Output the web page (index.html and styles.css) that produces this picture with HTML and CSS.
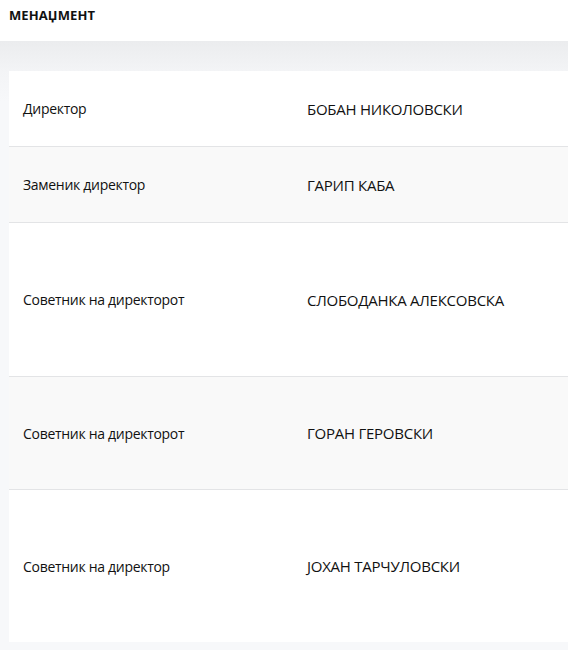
FILE: index.html
```html
<!DOCTYPE html>
<html lang="mk">
<head>
<meta charset="utf-8">
<title>Менаџмент</title>
<link rel="stylesheet" href="styles.css">
</head>
<body>
<header class="page-header">
  <h1 class="page-title">МЕНАЏМЕНТ</h1>
</header>
<main class="content">
  <table class="staff">
    <tbody>
      <tr class="row row-short"><td class="role">Директор</td><td class="name">БОБАН НИКОЛОВСКИ</td></tr>
      <tr class="row row-short alt"><td class="role">Заменик директор</td><td class="name">ГАРИП КАБА</td></tr>
      <tr class="row row-tall"><td class="role">Советник на директорот</td><td class="name">СЛОБОДАНКА АЛЕКСОВСКА</td></tr>
      <tr class="row row-mid alt"><td class="role">Советник на директорот</td><td class="name">ГОРАН ГЕРОВСКИ</td></tr>
      <tr class="row row-tall last"><td class="role">Советник на директор</td><td class="name">ЈОХАН ТАРЧУЛОВСКИ</td></tr>
    </tbody>
  </table>
</main>
</body>
</html>
```
FILE: styles.css
```css
html, body {
  margin: 0;
  padding: 0;
  overflow: hidden;
}
body {
  width: 568px;
  height: 650px;
  background: #f7f8fa;
  font-family: "Open Sans", "Noto Sans", sans-serif;
  color: #111;
}
.page-header {
  background: #fff;
  height: 41px;
  padding: 0 9px;
  box-sizing: border-box;
}
.page-title {
  margin: 0;
  padding-top: 6px;
  font-size: 13px;
  font-weight: 700;
  line-height: 18px;
  letter-spacing: 0.1px;
}
.content {
  background: linear-gradient(#ebecee 0px, #f3f4f6 30px, #f7f8fa 60px);
  padding: 30px 0 0 9px;
  height: 609px;
  box-sizing: border-box;
}
.staff {
  width: 568px;
  border-collapse: collapse;
  table-layout: fixed;
  font-size: 14px;
  letter-spacing: -0.3px;
}
.row td {
  vertical-align: middle;
  padding: 0 14px;
  border-bottom: 1px solid #e3e4e6;
  background: #fff;
}
.row .name {
  font-size: 15px;
  letter-spacing: -0.25px;
}
.row.alt td { background: #f9f9f9; }
.row.last td { border-bottom: none; }
.row-short td { height: 75px; }
.row-tall td { height: 153px; }
.row-mid td { height: 112px; }
.row.last td { height: 152px; }
.role { width: 256px; }
```
